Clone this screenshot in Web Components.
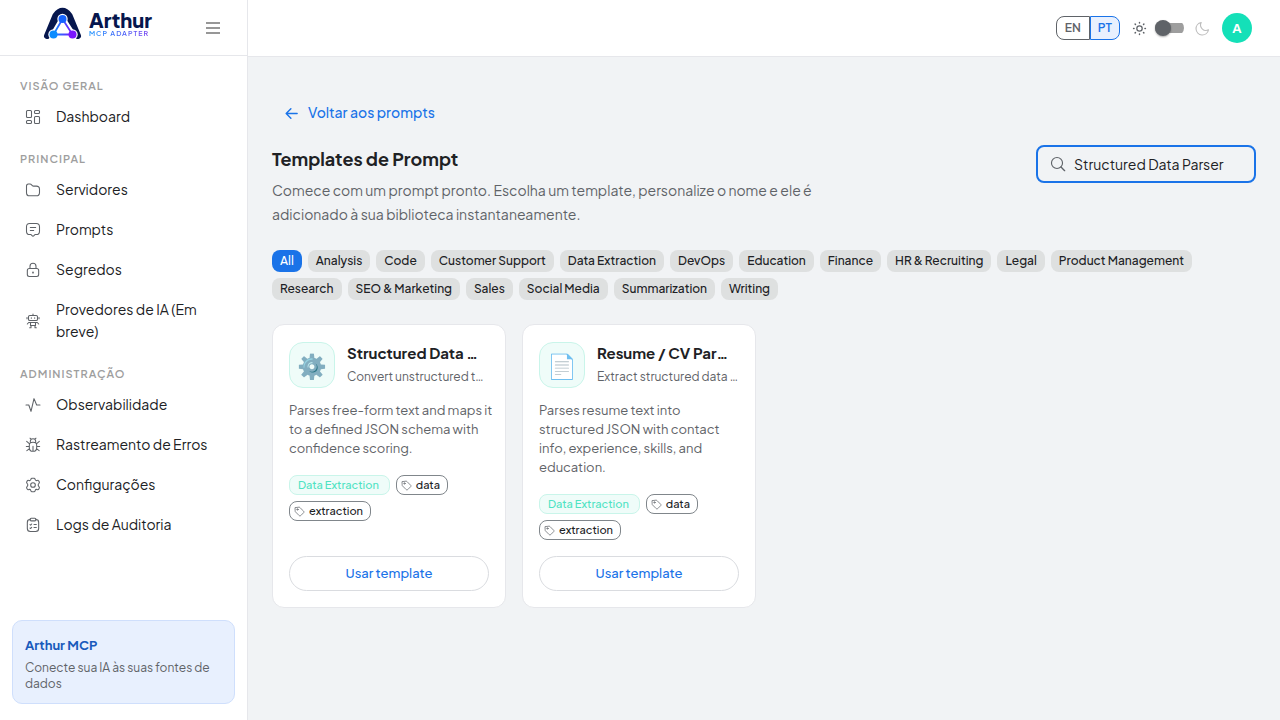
<!DOCTYPE html>
<html lang="pt">
<head>
<meta charset="utf-8">
<meta name="viewport" content="width=device-width, initial-scale=1">
<title>Templates de Prompt</title>
<style>
  :root {
    --blue: #1a73e8;
    --text: #202124;
    --muted: #5f6368;
    --line: #e6e7eb;
    --mint: #14e0b8;
  }
  body {
    margin: 0;
    font-family: "Plus Jakarta Sans", Inter, "Liberation Sans", sans-serif;
    font-size: 14px;
    color: var(--text);
    background: #f1f3f5;
  }
</style>
</head>
<body>
<app-shell>
  <side-nav slot="nav">
    <nav-section heading="Visão geral">
      <nav-item icon="dashboard">Dashboard</nav-item>
    </nav-section>
    <nav-section heading="Principal">
      <nav-item icon="folder">Servidores</nav-item>
      <nav-item icon="message">Prompts</nav-item>
      <nav-item icon="lock">Segredos</nav-item>
      <nav-item icon="robot">Provedores de IA (Em breve)</nav-item>
    </nav-section>
    <nav-section heading="Administração">
      <nav-item icon="pulse">Observabilidade</nav-item>
      <nav-item icon="bug">Rastreamento de Erros</nav-item>
      <nav-item icon="gear">Configurações</nav-item>
      <nav-item icon="clipboard">Logs de Auditoria</nav-item>
    </nav-section>
    <promo-box slot="footer" heading="Arthur MCP">Conecte sua IA às suas fontes de dados</promo-box>
  </side-nav>
  <top-bar slot="top"></top-bar>
  <back-link>Voltar aos prompts</back-link>
  <page-heading heading="Templates de Prompt">
    Comece com um prompt pronto. Escolha um template, personalize o nome e ele é adicionado à sua biblioteca instantaneamente.
    <search-box slot="action" value="Structured Data Parser"></search-box>
  </page-heading>
  <chip-list>
    <filter-chip selected>All</filter-chip>
    <filter-chip>Analysis</filter-chip>
    <filter-chip>Code</filter-chip>
    <filter-chip>Customer Support</filter-chip>
    <filter-chip>Data Extraction</filter-chip>
    <filter-chip>DevOps</filter-chip>
    <filter-chip>Education</filter-chip>
    <filter-chip>Finance</filter-chip>
    <filter-chip>HR &amp; Recruiting</filter-chip>
    <filter-chip>Legal</filter-chip>
    <filter-chip>Product Management</filter-chip>
    <filter-chip>Research</filter-chip>
    <filter-chip>SEO &amp; Marketing</filter-chip>
    <filter-chip>Sales</filter-chip>
    <filter-chip>Social Media</filter-chip>
    <filter-chip>Summarization</filter-chip>
    <filter-chip>Writing</filter-chip>
  </chip-list>
  <card-grid>
    <template-card emoji="⚙️" heading="Structured Data Parser" summary="Convert unstructured text to JSON">
      Parses free-form text and maps it to a defined JSON schema with confidence scoring.
      <tag-pill slot="tags" kind="category">Data Extraction</tag-pill>
      <tag-pill slot="tags">data</tag-pill>
      <tag-pill slot="tags">extraction</tag-pill>
    </template-card>
    <template-card emoji="📄" heading="Resume / CV Parser" summary="Extract structured data from resumes">
      Parses resume text into structured JSON with contact info, experience, skills, and education.
      <tag-pill slot="tags" kind="category">Data Extraction</tag-pill>
      <tag-pill slot="tags">data</tag-pill>
      <tag-pill slot="tags">extraction</tag-pill>
    </template-card>
  </card-grid>
</app-shell>

<script>
const define = (name, render) => customElements.define(name, class extends HTMLElement {
  constructor() {
    super();
    this.attachShadow({ mode: 'open' });
  }
  connectedCallback() {
    this.shadowRoot.innerHTML = '<style>*{box-sizing:border-box}button,input{font-family:inherit}</style>' + render(this);
  }
});

const ICONS = {
  dashboard: '<rect x="2.250" y="2.250" width="7.500" height="10.500" rx="1.500"/><rect x="14.250" y="2.250" width="7.500" height="4.500" rx="1.500"/><rect x="2.250" y="17.250" width="7.500" height="4.500" rx="1.500"/><rect x="14.250" y="11.250" width="7.500" height="10.500" rx="1.500"/>',
  folder: '<path d="M2.250 6.500C2.250 4 3 3.100 5 3.100h2.500c2.500 0 3 3.100 5.500 3.100h4c3.500 0 4.750 1 4.750 4.500v5c0 3.800-1 5-4.750 5H7c-3.800 0-4.750-1.200-4.750-5z"/>',
  message: '<path d="M7 2.250h10c3.600 0 4.750 1.400 4.750 5v6.500c0 3.600-1.200 5-4.750 5h-1.500c-1.500 0-2 2.500-3.500 2.500s-2-2.500-3.500-2.500H7c-3.600 0-4.750-1.400-4.750-5v-6.500c0-3.600 1.200-5 4.750-5zM8 12.750h5M8 8.250h8"/>',
  lock: '<path d="M7.500 9.750V6.500a4.500 4.500 0 0 1 9 0v3.200"/><rect x="3.500" y="9.750" width="17" height="12" rx="3"/><path d="M12 15.500v.5" stroke-width="2.500"/>',
  robot: '<rect x="5.250" y="3.750" width="13.500" height="7.500" rx="2"/><path d="M12 3.500V1.700M9.500 7v1M14.500 7v1M3 6.700v2M21 6.700v2M8.250 14.250v4.500h7.500v-4.500M3.500 16.500l2-2.250h13l2 2.250M9 18.750v3.500H7M15 18.750v3.500h2"/>',
  pulse: '<path d="M1.500 12h4.200L9 21.500 13.500 2.500 17.500 12h5"/>',
  bug: '<path d="M6.500 12c0-3 2.300-4.250 5.500-4.250s5.500 1.250 5.500 4.250v4c0 3.500-2.300 5.500-5.500 5.500S6.500 19.500 6.500 16zM8 7.750V6.500a4 4 0 0 1 8 0v1.250M9 3 7.500 1.800M15 3l1.500-1.200M6.500 14.250H2M17.500 14.250H22M6.500 10 2.500 6.500M17.500 10l4-3.500M6.800 17.500l-4 3M17.200 17.500l4 3M12 14v7"/>',
  gear: '<path d="m21.300 7.100-.5-.9c-.4-.6-.6-1-.9-1.100-.4-.2-.9-.1-1.700.2-1.300.4-2.400-.3-2.900-1.400l-.3-.9c-.3-.8-.6-1-1.300-1h-3.400c-.7 0-1 .2-1.300 1l-.3.9C8.200 5 7 5.700 5.800 5.300c-.8-.3-1.300-.4-1.700-.2-.3.200-.5.500-.9 1.100l-.5.9c-.7 1.200-.7 1.500.4 2.600 1.500 1.300 1.500 3.200 0 4.600-1.100 1-1.100 1.400-.4 2.600l.5.9c.4.600.6 1 .9 1.100.4.200.9.100 1.700-.2 1.300-.4 2.500.3 2.900 1.400l.3.900c.3.800.6 1 1.300 1h3.400c.7 0 1-.2 1.300-1l.3-.9c.4-1.100 1.600-1.800 2.900-1.400.8.300 1.300.4 1.700.2.300-.2.500-.5.900-1.100l.5-.9c.7-1.200.7-1.600-.4-2.600-1.500-1.400-1.500-3.300 0-4.600 1.100-1.100 1.100-1.400.4-2.600z"/><circle cx="12" cy="12" r="3.500"/>',
  clipboard: '<path d="M8 3.750c-3.500 0-4.500 1-4.500 4.500v9c0 3.500 1 4.500 4.500 4.500h8c3.500 0 4.500-1 4.500-4.500v-9c0-3.500-1-4.500-4.500-4.500"/><rect x="7.500" y="1.800" width="9" height="4" rx="1.800"/><path d="M13.500 11.250H17M7.500 11.500l1 .8L10 10.500M13.500 15.750H17M7.500 16.500l1 .8 1.500-1.800"/>',
  menu: '<path d="M1.500 4.500h21M1.500 12h21M1.500 19.500h21" stroke-width="2.300" stroke-linecap="butt"/>',
  back: '<path d="M21 12H4M11 4.500 3.500 12l7.500 7.500" stroke-width="2.300"/>',
  search: '<path d="m16.500 16.500 5.500 5.500" stroke-width="2"/><circle cx="10.500" cy="10.500" r="8.300" stroke-width="1.700"/>',
  sun: '<circle cx="12" cy="12" r="4.300" stroke-width="2"/><path d="M12 2.500v.8M12 20.700v.8M2.500 12h.8M20.700 12h.8M5 5l.6.600M18.400 18.400l.6.600M5 19l.6-.6M18.400 5.600l.6-.6" stroke-width="2.300"/>',
  moon: '<path d="M21.500 14.100A8.600 8.600 0 0 1 9.900 2.500 10 10 0 1 0 21.500 14.100z" stroke-width="1.800"/>',
  tag: '<path d="M3 3.500 11 2.500c.8 0 1.300.2 1.900.8l8 8c1.200 1.200 1.200 2.200 0 3.400l-6.200 6.200c-1.200 1.200-2.200 1.200-3.400 0l-8-8c-.6-.6-.8-1.100-.8-1.900z"/><circle cx="7.500" cy="7.500" r="1.500"/>'
};

define('ui-icon', el => `
  <style>
    :host { display: block; flex: none; width: 16px; height: 16px; }
    svg { display: block; width: 100%; height: 100%; fill: none; stroke: currentColor; stroke-width: 1.600; stroke-linecap: round; stroke-linejoin: round; }
  </style>
  <svg viewBox="0 0 24 24" aria-hidden="true">${ICONS[el.getAttribute('name')]}</svg>`);

define('app-shell', () => `
  <style>
    :host { display: grid; grid-template-columns: 248px minmax(0, 1fr); min-height: 100vh; }
    .page { display: flex; flex-direction: column; min-width: 0; }
    main { padding: 40px 24px 24px; }
  </style>
  <slot name="nav"></slot>
  <div class="page"><slot name="top"></slot><main><slot></slot></main></div>`);

define('brand-logo', () => `
  <style>
    :host { display: flex; align-items: center; gap: 6px; }
    svg { display: block; width: 40px; height: 34px; }
    .words { display: flex; flex-direction: column; }
    .name { font-size: 20px; line-height: 20px; font-weight: 800; color: #06164d; }
    .sub { font-size: 7px; line-height: 8px; font-weight: 600; letter-spacing: 1px; color: transparent; background: linear-gradient(90deg, #1490ff, #7a3cf0); -webkit-background-clip: text; background-clip: text; }
  </style>
  <svg viewBox="0 0 40 34" aria-hidden="true">
    <defs><linearGradient id="g" x1="10" x2="30" y1="0" y2="0" gradientUnits="userSpaceOnUse"><stop offset="0" stop-color="#0a8bff"/><stop offset="1" stop-color="#7a16ff"/></linearGradient></defs>
    <path d="M4 29 12.500 8.500Q19.500-1 26.500 8.500L35 29" fill="#06164d" stroke="#06164d" stroke-width="6" stroke-linecap="round" stroke-linejoin="round"/>
    <path d="M19.500 12 10.500 27.500h19z" fill="#fff" stroke="#fff" stroke-width="6" stroke-linejoin="round"/>
    <path d="M9 28h21v6H9z" fill="#fff"/>
    <g fill="#fff"><circle cx="19.500" cy="12" r="5.200"/><circle cx="10.500" cy="27.500" r="5.200"/><circle cx="29.500" cy="27.500" r="5.200"/></g>
    <path d="M19.500 12 10.500 27.500h19z" fill="#fff" stroke="url(#g)" stroke-width="1.800"/>
    <circle cx="19.500" cy="12" r="4" fill="#1463ff"/><circle cx="10.500" cy="27.500" r="4" fill="#0a8bff"/><circle cx="29.500" cy="27.500" r="4" fill="#7a16ff"/>
  </svg>
  <div class="words"><span class="name">Arthur</span><span class="sub">MCP ADAPTER</span></div>`);

define('side-nav', () => `
  <style>
    :host { display: flex; flex-direction: column; background: #fff; border-right: 1px solid var(--line); box-sizing: border-box; }
    header { display: flex; align-items: center; justify-content: space-between; height: 56px; padding: 0 24px 8px 43px; border-bottom: 1px solid var(--line); }
    button { display: flex; padding: 0; margin-top: 8px; border: 0; background: none; color: #757575; width: 20px; height: 20px; align-items: center; justify-content: center; }
    nav { display: flex; flex-direction: column; gap: 16px; flex: 1; padding: 22px 12px 16px; }
    footer { padding: 0 12px 16px; }
  </style>
  <header><brand-logo></brand-logo><button type="button" aria-label="Menu"><ui-icon name="menu"></ui-icon></button></header>
  <nav><slot></slot></nav>
  <footer><slot name="footer"></slot></footer>`);

define('nav-section', el => `
  <style>
    :host { display: block; }
    h2 { margin: 0 0 5px; padding: 0 8px; font-size: 11px; line-height: 16px; font-weight: 600; letter-spacing: 1px; text-transform: uppercase; color: #9e9e9e; }
    .items { display: flex; flex-direction: column; gap: 4px; }
  </style>
  <h2>${el.getAttribute('heading')}</h2>
  <div class="items"><slot></slot></div>`);

define('nav-item', el => `
  <style>
    :host { display: block; }
    a { display: flex; align-items: center; gap: 15px; padding: 6px 12px; line-height: 22px; color: inherit; text-decoration: none; }
    span { padding-bottom: 2px; }
    ui-icon { margin-left: 1px; color: var(--muted); }
  </style>
  <a href="#"><ui-icon name="${el.getAttribute('icon')}"></ui-icon><span><slot></slot></span></a>`);

define('promo-box', el => `
  <style>
    :host { display: block; box-sizing: border-box; padding: 13px 12px 11px; border: 1px solid #cfdffc; border-radius: 10px; background: #e8f0fe; }
    h3 { margin: 0 0 4px; font-size: 13px; line-height: 22px; font-weight: 700; color: #185abc; }
    p { margin: 0; font-size: 12px; line-height: 16px; color: var(--muted); }
  </style>
  <h3>${el.getAttribute('heading')}</h3><p><slot></slot></p>`);

define('top-bar', () => `
  <style>
    :host { display: flex; align-items: center; justify-content: flex-end; gap: 12px; box-sizing: border-box; height: 57px; padding: 0 28px; background: #fff; border-bottom: 1px solid var(--line); color: var(--muted); }
    .lang { display: flex; }
    .lang button { height: 24px; padding: 0 8px; font-size: 12px; line-height: 20px; font-weight: 600; color: var(--muted); background: #fff; border: 1px solid var(--muted); border-radius: 8px 0 0 8px; }
    .lang button + button { padding: 0 7px; color: var(--blue); background: #e8f0fe; border-color: var(--blue); border-radius: 0 8px 8px 0; }
    .theme { display: flex; align-items: center; gap: 8px; }
    ui-icon { width: 15px; height: 15px; }
    .moon { color: #bdbdbd; margin-left: 3px; }
    input { appearance: none; display: flex; align-items: center; width: 29px; height: 16px; margin: 0; background: linear-gradient(#9e9e9e, #9e9e9e) center / 29px 10px no-repeat; border-radius: 8px; }
    input::before { content: ""; width: 16px; height: 16px; border-radius: 50%; background: #5f6368; box-shadow: 0 1px 2px #0005; }
    .avatar { width: 30px; height: 30px; padding: 0; border: 0; border-radius: 50%; background: var(--mint); color: #fff; font-size: 13px; font-weight: 700; }
  </style>
  <div class="lang"><button type="button">EN</button><button type="button">PT</button></div>
  <div class="theme"><ui-icon name="sun"></ui-icon><input type="checkbox" role="switch" aria-label="Tema escuro"><ui-icon class="moon" name="moon"></ui-icon></div>
  <button class="avatar" type="button">A</button>`);

define('back-link', () => `
  <style>
    :host { display: block; margin-bottom: 16px; }
    a { display: inline-flex; align-items: center; gap: 9px; height: 32px; padding: 0 12px; font-weight: 500; color: var(--blue); text-decoration: none; }
    span { padding-bottom: 2px; }
    ui-icon { width: 15px; height: 15px; }
  </style>
  <a href="#"><ui-icon name="back"></ui-icon><span><slot></slot></span></a>`);

define('page-heading', el => `
  <style>
    :host { display: flex; align-items: flex-start; justify-content: space-between; gap: 24px; }
    h1 { margin: 0 0 5px; font-size: 18px; line-height: 28px; font-weight: 700; }
    p { margin: 0; max-width: 560px; line-height: 24px; color: var(--muted); }
  </style>
  <div><h1>${el.getAttribute('heading')}</h1><p><slot></slot></p></div>
  <slot name="action"></slot>`);

define('search-box', el => `
  <style>
    :host { display: block; flex: none; width: 220px; }
    label { display: flex; align-items: center; gap: 8px; height: 38px; padding: 0 12px; border: 2px solid var(--blue); border-radius: 8px; color: var(--muted); }
    input { flex: 1; min-width: 0; padding: 0; border: 0; outline: 0; background: none; font-size: 14px; color: var(--text); }
  </style>
  <label><ui-icon name="search"></ui-icon><input type="text" aria-label="Buscar templates" value="${el.getAttribute('value')}"></label>`);

define('chip-list', () => `
  <style>:host { display: flex; flex-wrap: wrap; gap: 6px; margin: 24px 0; }</style><slot></slot>`);

define('filter-chip', () => `
  <style>
    :host { display: block; }
    button { display: block; height: 22px; padding: 0 8px; border: 0; border-radius: 8px; background: #dee0e0; color: var(--text); font-size: 12px; font-weight: 500; line-height: 22px; white-space: nowrap; }
    :host([selected]) button { background: var(--blue); color: #fff; }
  </style>
  <button type="button"><slot></slot></button>`);

define('card-grid', () => `
  <style>:host { display: grid; grid-template-columns: repeat(auto-fill, minmax(220px, 1fr)); gap: 16px; }</style><slot></slot>`);

define('template-card', el => `
  <style>
    :host { display: flex; flex-direction: column; box-sizing: border-box; min-width: 0; padding: 16px; border: 1px solid var(--line); border-radius: 12px; background: #fff; }
    header { display: flex; align-items: center; gap: 12px; margin-bottom: 12px; }
    .badge { display: flex; flex: none; align-items: center; justify-content: center; width: 46px; height: 46px; border: 1px solid #c9f5ea; border-radius: 14px; background: #effcf9; font-size: 24px; line-height: 32px; }
    .text { min-width: 0; flex: 1; }
    h2, .text p { margin: 0; line-height: 24px; overflow: hidden; white-space: nowrap; text-overflow: ellipsis; }
    h2 { margin-right: 8px; font-size: 15px; font-weight: 700; }
    .text p { font-size: 12px; color: var(--muted); }
    .body { margin: 0 -8px 17px 0; font-size: 13px; line-height: 19px; color: var(--muted); }
    .tags { display: flex; flex-wrap: wrap; gap: 6px; margin-bottom: 16px; }
    button { height: 35px; margin-top: auto; padding: 0 0 2px; border: 1px solid #dadce0; border-radius: 18px; background: #fff; color: var(--blue); font-size: 13px; font-weight: 500; }
  </style>
  <header>
    <span class="badge">${el.getAttribute('emoji')}</span>
    <div class="text"><h2>${el.getAttribute('heading')}</h2><p>${el.getAttribute('summary')}</p></div>
  </header>
  <p class="body"><slot></slot></p>
  <div class="tags"><slot name="tags"></slot></div>
  <button type="button">Usar template</button>`);

define('tag-pill', el => `
  <style>
    :host { display: flex; align-items: center; gap: 4px; box-sizing: border-box; height: 20px; padding: 0 7px 0 4px; border: 1px solid #80868b; border-radius: 8px; font-size: 11px; font-weight: 500; line-height: 18px; }
    :host([kind="category"]) { padding: 0 10px 0 8px; border-color: #c9f5ea; background: #effcf9; color: #4fe3c3; }
    ui-icon { width: 11px; height: 11px; color: var(--muted); }
  </style>
  ${el.hasAttribute('kind') ? '' : '<ui-icon name="tag"></ui-icon>'}<slot></slot>`);
</script>
</body>
</html>
